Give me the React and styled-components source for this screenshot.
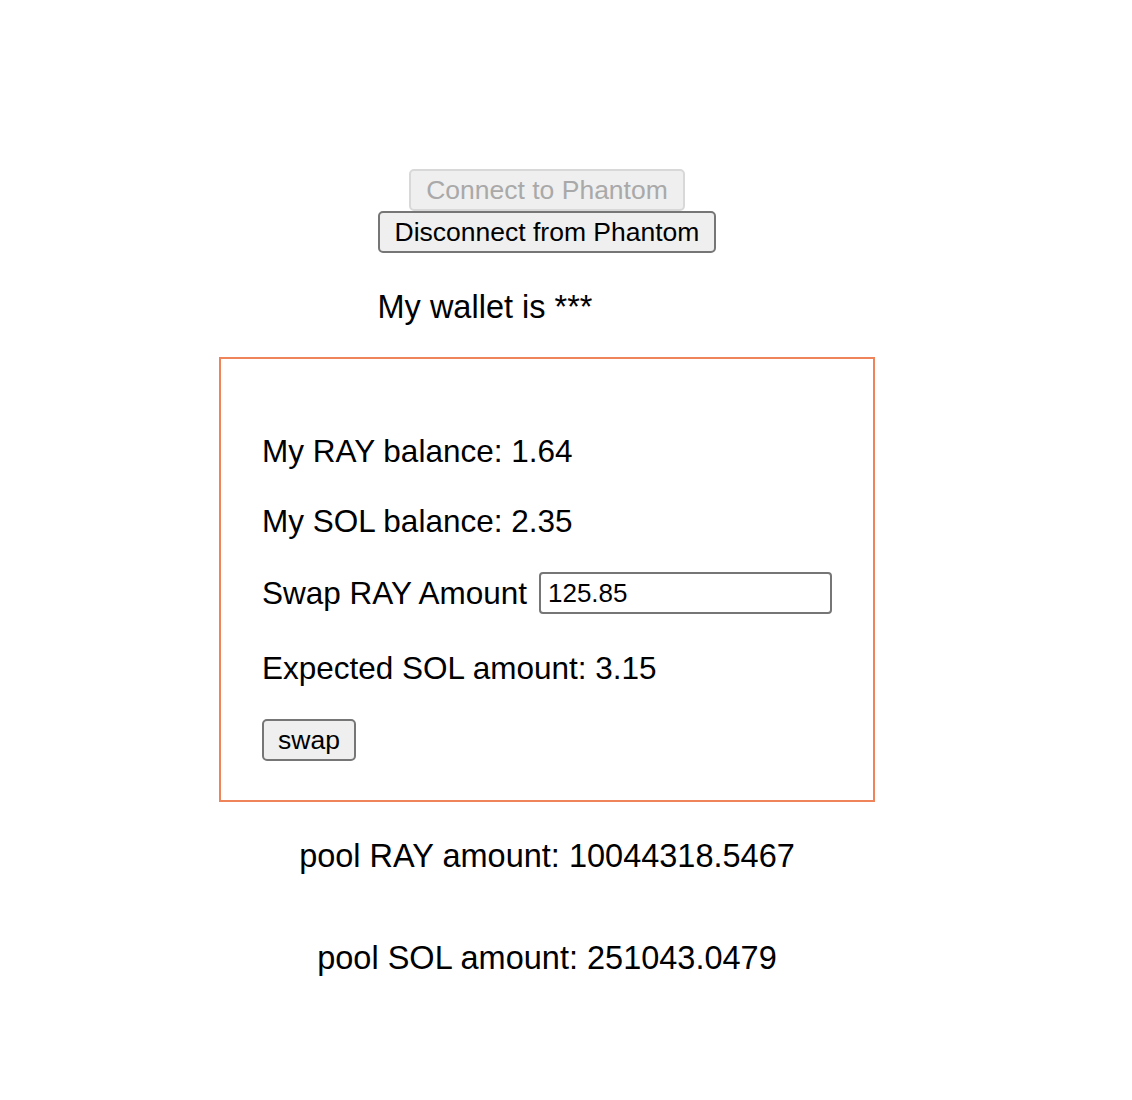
import styled, { createGlobalStyle } from 'styled-components'

const GlobalStyle = createGlobalStyle`
  body {
    margin: 0;
    font-family: "Liberation Sans", Arial, sans-serif;
    color: #000;
    background: #fff;
  }
`;

const Page = styled.div`
  width: 656px;
  margin-left: 219px;
  padding-top: 169px;
  display: flex;
  flex-direction: column;
  align-items: center;
`;

const WalletBlock = styled.div`
  display: flex;
  flex-direction: column;
  align-items: center;
`;

const Button = styled.button`
  font-family: "Liberation Sans", Arial, sans-serif;
  font-size: 26.5px;
  height: 42px;
  padding: 0 ${(props) => props.small ? '14px' : '15px'};
  background: #efefef;
  color: ${(props) => props.disabled ? '#a9a9a9' : '#000'};
  border: 2px solid ${(props) => props.disabled ? '#d8d8d8' : '#767676'};
  border-radius: 5px;
  line-height: 1;
`;

const WalletText = styled.p`
  align-self: flex-start;
  margin: 35px 0 0;
  font-size: 32.5px;
  line-height: 38px;
`;

const SwapBox = styled.div`
  align-self: stretch;
  margin-top: 31px;
  height: 445px;
  box-sizing: border-box;
  border: 2px solid #ef845b;
  padding: 73px 0 0 41px;
  display: flex;
  flex-direction: column;
  align-items: flex-start;
`;

const Line = styled.p`
  margin: 0 0 ${(props) => props.gap || '32px'};
  font-size: 31.5px;
  line-height: 38px;
  display: flex;
  align-items: center;
  gap: 12px;
`;

const AmountInput = styled.input`
  width: 293px;
  height: 42px;
  box-sizing: border-box;
  font-family: "Liberation Sans", Arial, sans-serif;
  font-size: 26px;
  padding: 0 7px;
  border: 2px solid #767676;
  border-radius: 4px;
`;

const PoolText = styled.p`
  margin: ${(props) => props.first ? '35px' : '64px'} 0 0;
  font-size: 32.5px;
  line-height: 38px;
  text-align: center;
`;

function App() {
  return (
    <>
      <GlobalStyle />
      <Page>
        <WalletBlock>
          <Button disabled>Connect to Phantom</Button>
          <Button>Disconnect from Phantom</Button>
          <WalletText>My wallet is ***</WalletText>
        </WalletBlock>
        <SwapBox>
          <Line>My RAY balance: 1.64</Line>
          <Line>My SOL balance: 2.35</Line>
          <Line gap="35px">
            Swap RAY Amount <AmountInput defaultValue="125.85" />
          </Line>
          <Line gap="32px">Expected SOL amount: 3.15</Line>
          <Button small>swap</Button>
        </SwapBox>
        <PoolText first>pool RAY amount: 10044318.5467</PoolText>
        <PoolText>pool SOL amount: 251043.0479</PoolText>
      </Page>
    </>
  )
}

export default App;
